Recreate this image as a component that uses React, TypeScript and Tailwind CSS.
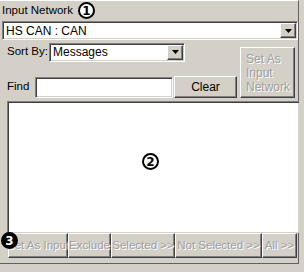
import React from "react";

const sunken =
  "border border-t-[#808080] border-l-[#808080] border-b-white border-r-white shadow-[inset_1px_1px_0_#404040,inset_-1px_-1px_0_#d4d0c8] bg-white";
const raised =
  "border border-t-white border-l-white border-b-[#404040] border-r-[#404040] shadow-[inset_-1px_-1px_0_#808080,inset_1px_1px_0_#d4d0c8] bg-[#d4d0c8]";
const disabledText = "text-[#a0a0a0] [text-shadow:1px_1px_0_#ffffff]";

function DropArrow() {
  return (
    <div className={`${raised} w-[16px] h-[15px] flex items-center justify-center shrink-0`}>
      <svg width="7" height="4" viewBox="0 0 7 4">
        <path d="M0 0h7L3.5 4z" fill="#000" />
      </svg>
    </div>
  );
}

function Combo({ value, className }: { value: string; className: string }) {
  return (
    <div className={`${sunken} ${className} flex items-center pl-[3px] pr-[1px] text-[12px] text-black shrink-0`}>
      <span className="flex-1 leading-none">{value}</span>
      <DropArrow />
    </div>
  );
}

function Badge({ n, filled, className }: { n: string; filled?: boolean; className: string }) {
  return (
    <div
      className={`absolute w-[17px] h-[17px] rounded-full border-[2px] border-black flex items-center justify-center text-[12px] font-bold leading-none font-['DejaVu_Sans',sans-serif] ${
        filled ? "bg-black text-white" : "bg-white text-black"
      } ${className}`}
    >
      {n}
    </div>
  );
}

export default function App() {
  const bottom = [
    { label: "Set As Input", w: "w-[60px]" },
    { label: "Exclude", w: "w-[43px]" },
    { label: "Selected >>", w: "w-[64px]" },
    { label: "Not Selected >>", w: "w-[87px]" },
    { label: "All >>", w: "w-[35px]" },
  ];

  return (
    <div className="relative w-[304px] h-[272px] bg-[#d4d0c8] overflow-hidden font-['Liberation_Sans',Arial,sans-serif] text-[11px] text-black">
      <div className="w-[299px] h-[264px] border-t border-t-white border-r border-r-[#606060] border-b border-b-[#606060] flex flex-col">
        <div className="h-[20px] pl-[2px] pt-[4px] leading-none text-[11.5px]">Input Network</div>
        <Combo value="HS CAN : CAN" className="ml-[2px] w-[296px] h-[19px]" />

        <div className="flex mt-[2px]">
          <div className="w-[238px] flex flex-col">
            <div className="flex items-center h-[20px]">
              <span className="pl-[7px] w-[49px] shrink-0 whitespace-nowrap text-[11.5px]">Sort By:</span>
              <Combo value="Messages" className="w-[136px] h-[19px]" />
            </div>
            <div className="flex items-center h-[24px] mt-[13px]">
              <span className="pl-[7px] w-[35px] shrink-0 text-[11.5px]">Find</span>
              <div className={`${sunken} w-[138px] h-[21px] shrink-0`} />
              <div className={`${raised} ml-[1px] w-[63px] h-[22px] shrink-0 flex items-center justify-center text-[12px]`}>
                Clear
              </div>
            </div>
          </div>
          <div
            className={`${raised} ml-[2px] mt-[5px] w-[55px] h-[51px] flex flex-col items-start justify-center pl-[5px] text-[12px] leading-[14px] ${disabledText}`}
          >
            <span>Set As</span>
            <span>Input</span>
            <span>Network</span>
          </div>
        </div>

        <div className={`${sunken} ml-[7px] mt-[2px] w-[292px] h-[132px] border-r-0 border-b-0`} />

        <div className="flex ml-[8px] h-[25px]">
          {bottom.map((b) => (
            <div
              key={b.label}
              className={`${raised} ${b.w} h-[25px] flex items-center justify-center text-[11.5px] whitespace-nowrap ${disabledText}`}
            >
              {b.label}
            </div>
          ))}
        </div>
      </div>

      <Badge n="1" className="left-[78px] top-[2px]" />
      <Badge n="2" className="left-[142px] top-[153px]" />
      <Badge n="3" filled className="left-[1px] top-[232px]" />
    </div>
  );
}
